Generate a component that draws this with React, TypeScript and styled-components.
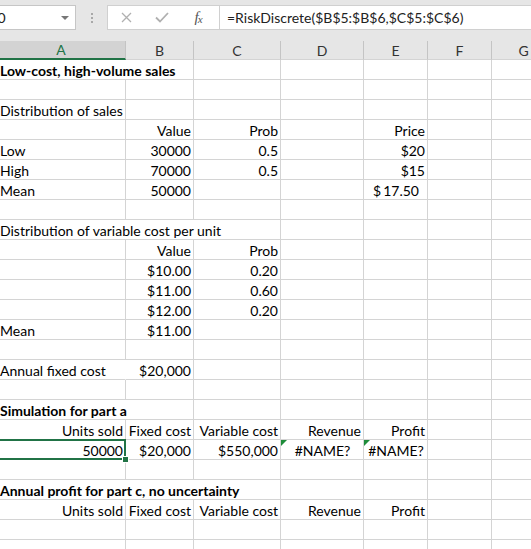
import React from 'react'
import styled, { createGlobalStyle } from 'styled-components'

const GlobalStyle = createGlobalStyle`
  body {
    margin: 0;
    overflow: hidden;
    background: #ffffff;
    font-family: Lato, 'Liberation Sans', sans-serif;
  }
`

const GRID = '#d4d4d4'
const GREEN = '#217346'
const COLS = [129, 68, 87, 83, 64, 64, 64]
const LETTERS = ['A', 'B', 'C', 'D', 'E', 'F', 'G']

type Align = 'left' | 'right' | 'center' | 'acct'

interface CellSpec {
  t: string
  a: Align
  b?: boolean
  span?: number
  open?: boolean
  sel?: boolean
  err?: boolean
}

const L = (t: string, extra: Partial<CellSpec> = {}): CellSpec => ({ t, a: 'left', ...extra })
const R = (t: string, extra: Partial<CellSpec> = {}): CellSpec => ({ t, a: 'right', ...extra })
const E = (t: string): CellSpec => ({ t, a: 'center', err: true })

const headings = [R('Units sold'), R('Fixed cost'), R('Variable cost'), R('Revenue'), R('Profit')]

const rows: (CellSpec | null)[][] = [
  [L('Low-cost, high-volume sales', { b: true, span: 2 })],
  [],
  [L('Distribution of sales')],
  [null, R('Value'), R('Prob'), null, R('Price')],
  [L('Low'), R('30000'), R('0.5'), null, R('$20')],
  [L('High'), R('70000'), R('0.5'), null, R('$15')],
  [L('Mean'), R('50000'), null, null, { t: '17.50', a: 'acct' }],
  [],
  [L('Distribution of variable cost per unit', { span: 3 })],
  [null, R('Value'), R('Prob')],
  [null, R('$10.00'), R('0.20')],
  [null, R('$11.00'), R('0.60')],
  [null, R('$12.00'), R('0.20')],
  [L('Mean'), R('$11.00')],
  [],
  [L('Annual fixed cost', { open: true }), R('$20,000')],
  [],
  [L('Simulation for part a', { b: true, span: 2 })],
  headings,
  [R('50000', { sel: true }), R('$20,000'), R('$550,000'), E('#NAME?'), E('#NAME?')],
  [],
  [L('Annual profit for part c, no uncertainty', { b: true, span: 3 })],
  headings,
  [],
  [],
]

const Frame = styled.div`
  width: 531px;
  height: 549px;
  overflow: hidden;
  background: #ffffff;
`

const FormulaBar = styled.div`
  display: flex;
  align-items: flex-start;
  height: 41px;
  padding-top: 5px;
  box-sizing: border-box;
  background: #e6e6e6;
`

const NameBox = styled.div`
  flex: 0 0 104px;
  height: 25px;
  margin-left: -28px;
  padding-left: 7px;
  box-sizing: border-box;
  background: #ffffff;
  border: 1px solid #c6c6c6;
  display: flex;
  align-items: center;
  font-size: 14px;
  color: #222;
`

const DropArrow = styled.span`
  margin-left: auto;
  margin-right: 6px;
  width: 0;
  height: 0;
  border-left: 4px solid transparent;
  border-right: 4px solid transparent;
  border-top: 4px solid #777;
`

const Grip = styled.div`
  flex: 0 0 31px;
  height: 25px;
  display: flex;
  flex-direction: column;
  align-items: center;
  justify-content: center;
  gap: 2px;

  span {
    width: 2px;
    height: 2px;
    background: #a8a8a8;
  }
`

const ActionBox = styled.div`
  flex: 0 0 113px;
  height: 25px;
  box-sizing: border-box;
  background: #ffffff;
  border: 1px solid #d0d0d0;
  display: flex;
  align-items: center;
`

const ActionSlot = styled.span`
  flex: 0 0 36px;
  display: flex;
  align-items: center;
  justify-content: center;
`

const FxLabel = styled.span`
  font-family: 'Liberation Serif', serif;
  font-style: italic;
  font-size: 15px;
  color: #555;
  letter-spacing: -1px;

  small {
    font-size: 11px;
    vertical-align: -1px;
  }
`

const FormulaInput = styled.div`
  flex: 1;
  height: 25px;
  box-sizing: border-box;
  background: #ffffff;
  border: 1px solid #d0d0d0;
  border-left: none;
  border-right: none;
  display: flex;
  align-items: center;
  padding-left: 7px;
  font-size: 14px;
  color: #222;
  white-space: nowrap;
`

const Sheet = styled.div`
  display: grid;
  grid-template-columns: ${COLS.map((w) => `${w}px`).join(' ')};
  margin-left: -3px;
  font-size: 14px;
  color: #000;
`

const ColumnHeader = styled.div<{ $selected?: boolean }>`
  height: 19px;
  box-sizing: border-box;
  display: flex;
  align-items: center;
  justify-content: center;
  background: ${(p) => (p.$selected ? '#d3d3d3' : '#e6e6e6')};
  color: ${(p) => (p.$selected ? GREEN : '#333')};
  border-right: 1px solid #c4c4c4;
  border-bottom: ${(p) => (p.$selected ? `2px solid ${GREEN}` : '1px solid #d4d4d4')};
  font-size: 14px;
`

const justify: Record<Align, string> = {
  left: 'flex-start',
  right: 'flex-end',
  center: 'center',
  acct: 'space-between',
}

const Cell = styled.div<{
  $align: Align
  $span: number
  $bold?: boolean
  $open?: boolean
  $selected?: boolean
  $error?: boolean
}>`
  position: relative;
  grid-column: span ${(p) => p.$span};
  height: 20px;
  box-sizing: border-box;
  border-right: 1px solid ${(p) => (p.$open ? '#ffffff' : GRID)};
  border-bottom: 1px solid ${GRID};
  padding: ${(p) => (p.$align === 'acct' ? '2px 8px 0 9px' : '2px 2px 0 3px')};
  display: flex;
  align-items: center;
  justify-content: ${(p) => justify[p.$align]};
  font-weight: ${(p) => (p.$bold ? 700 : 400)};
  white-space: nowrap;
  line-height: 17px;

  ${(p) =>
    p.$selected &&
    `
    z-index: 1;
    &::before {
      content: '';
      position: absolute;
      top: -1px;
      left: -1px;
      right: -1px;
      bottom: -1px;
      border: 2px solid ${GREEN};
    }
    &::after {
      content: '';
      position: absolute;
      right: -4px;
      bottom: -4px;
      width: 5px;
      height: 5px;
      background: ${GREEN};
      border: 1px solid #ffffff;
    }
  `}

  ${(p) =>
    p.$error &&
    `
    &::before {
      content: '';
      position: absolute;
      top: 0;
      left: 0;
      border-top: 6px solid #1e8c3a;
      border-right: 6px solid transparent;
    }
  `}
`

function CancelIcon() {
  return (
    <svg width='11' height='11' viewBox='0 0 11 11'>
      <path d='M1 1 L10 10 M10 1 L1 10' stroke='#b0b0b0' strokeWidth='1.3' fill='none' />
    </svg>
  )
}

function EnterIcon() {
  return (
    <svg width='14' height='11' viewBox='0 0 14 11'>
      <path d='M1 5.5 L5 9.5 L13 1' stroke='#b0b0b0' strokeWidth='1.8' fill='none' />
    </svg>
  )
}

function SheetRow({ cells }: { cells: (CellSpec | null)[] }) {
  const out: React.ReactNode[] = []
  let c = 0
  while (c < COLS.length) {
    const cell = cells[c]
    if (cell) {
      const span = cell.span ?? 1
      out.push(
        <Cell
          key={c}
          $align={cell.a}
          $span={span}
          $bold={cell.b}
          $open={cell.open}
          $selected={cell.sel}
          $error={cell.err}
        >
          {cell.a === 'acct' ? (
            <>
              <span>$</span>
              <span>{cell.t}</span>
            </>
          ) : (
            cell.t
          )}
        </Cell>,
      )
      c += span
    } else {
      out.push(<Cell key={c} $align='left' $span={1} />)
      c += 1
    }
  }
  return <>{out}</>
}

export default function App() {
  return (
    <Frame>
      <GlobalStyle />
      <FormulaBar>
        <NameBox>
          A20
          <DropArrow />
        </NameBox>
        <Grip>
          <span />
          <span />
          <span />
        </Grip>
        <ActionBox>
          <ActionSlot>
            <CancelIcon />
          </ActionSlot>
          <ActionSlot>
            <EnterIcon />
          </ActionSlot>
          <ActionSlot>
            <FxLabel>
              f<small>x</small>
            </FxLabel>
          </ActionSlot>
        </ActionBox>
        <FormulaInput>=RiskDiscrete($B$5:$B$6,$C$5:$C$6)</FormulaInput>
      </FormulaBar>
      <Sheet>
        {LETTERS.map((l, i) => (
          <ColumnHeader key={l} $selected={i === 0}>
            {l}
          </ColumnHeader>
        ))}
        {rows.map((r, i) => (
          <SheetRow key={i} cells={r} />
        ))}
      </Sheet>
    </Frame>
  )
}
